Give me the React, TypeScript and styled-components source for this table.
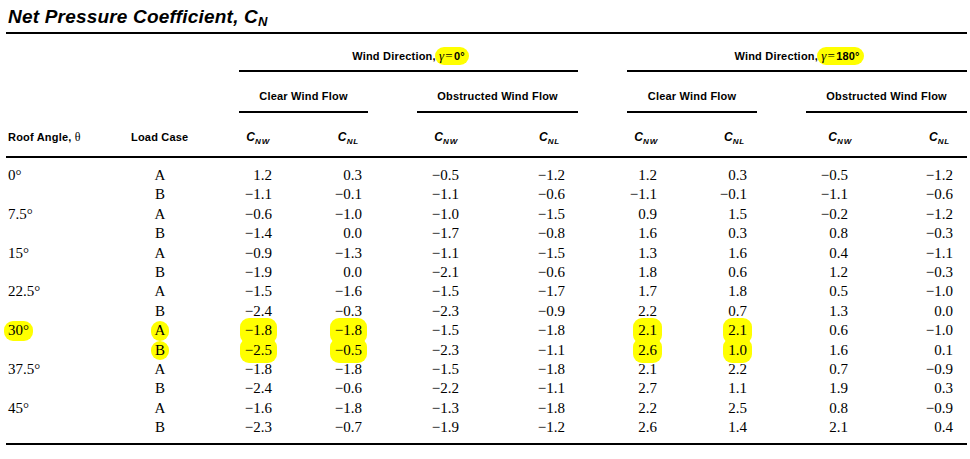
import React from 'react';
import styled, { createGlobalStyle } from 'styled-components';

const GlobalStyle = createGlobalStyle`
  html, body {
    margin: 0;
    padding: 0;
    background: #ffffff;
    color: #000000;
  }
`;

const Page = styled.main`
  padding: 5px 3px 0 6px;
  font-family: 'Liberation Sans', Arial, sans-serif;
`;

const Title = styled.h1`
  margin: 0 0 3px 2px;
  font-size: 19px;
  line-height: 24px;
  font-weight: bold;
  font-style: italic;
  letter-spacing: 0.2px;
`;

const TitleSub = styled.sub`
  font-size: 13px;
  vertical-align: -3px;
  line-height: 0;
`;

const Table = styled.table`
  width: 961px;
  table-layout: fixed;
  border-collapse: collapse;
  border-top: 2px solid #000;
`;

const HeadCell = styled.th<{ $pt: number }>`
  padding: ${(p) => p.$pt}px 0 0 0;
  font-size: 11px;
  line-height: 14px;
  font-weight: bold;
  text-align: center;
  vertical-align: bottom;
`;

const Span = styled.div<{ $ml: number; $mr: number; $pb: number }>`
  margin: 0 ${(p) => p.$mr}px 0 ${(p) => p.$ml}px;
  padding-bottom: ${(p) => p.$pb}px;
  border-bottom: 2px solid #000;
  white-space: nowrap;
  letter-spacing: 0.2px;
`;

const ColHead = styled.th<{ $align: 'left' | 'center' | 'right'; $pl?: number; $pr?: number }>`
  padding: 17px ${(p) => p.$pr ?? 0}px 12px ${(p) => p.$pl ?? 0}px;
  font-size: 11px;
  line-height: 14px;
  font-weight: bold;
  text-align: ${(p) => p.$align};
  border-bottom: 2px solid #000;
  white-space: nowrap;
  letter-spacing: 0.2px;
`;

const Sym = styled.span`
  font-style: italic;
  font-size: 12px;
`;

const SymSub = styled.sub`
  font-size: 8px;
  vertical-align: -2.5px;
  line-height: 0;
  letter-spacing: 0.8px;
`;

const Serif = styled.span<{ $italic?: boolean; $size?: number }>`
  font-family: 'Liberation Serif', 'Times New Roman', serif;
  font-style: ${(p) => (p.$italic ? 'italic' : 'normal')};
  font-weight: normal;
  font-size: ${(p) => p.$size ?? 12}px;
`;

const Equals = styled.span`
  font-family: 'Liberation Serif', 'Times New Roman', serif;
  font-weight: normal;
  font-size: 13px;
  margin: 0 1px;
`;

const Mark = styled.span<{ $padY?: number; $padX?: number }>`
  display: inline-block;
  background: #ffff00;
  border-radius: 9px;
  padding: ${(p) => p.$padY ?? 0}px ${(p) => p.$padX ?? 3}px;
  margin: -${(p) => p.$padY ?? 0}px -${(p) => p.$padX ?? 3}px;
`;

const Row = styled.tr<{ $first?: boolean; $last?: boolean }>`
  & > td {
    padding-top: ${(p) => (p.$first ? 8 : 0)}px;
    padding-bottom: ${(p) => (p.$last ? 5 : 0)}px;
    border-bottom: ${(p) => (p.$last ? '2px solid #000' : 'none')};
  }
`;

const Cell = styled.td<{ $align: 'left' | 'center' | 'right'; $pl?: number; $pr?: number }>`
  font-family: 'Liberation Serif', 'Times New Roman', serif;
  font-size: 15px;
  line-height: 19.4px;
  height: 19.4px;
  text-align: ${(p) => p.$align};
  padding-left: ${(p) => p.$pl ?? 0}px;
  padding-right: ${(p) => p.$pr ?? 0}px;
  white-space: nowrap;
`;

const colWidths = [114, 80, 100, 92, 108, 102, 98, 81, 99, 87];
const dataPad = [28, 30, 41, 37, 43, 34, 32, 14];
const headPad = [30, 33, 42, 42, 42, 36, 28, 17];
const headSubs = ['NW', 'NL', 'NW', 'NL', 'NW', 'NL', 'NW', 'NL'];

type Load = { c: string; v: string[] };
type Angle = { a: string; loads: Load[] };

const m = (s: string) => s.replace(/-/g, '\u2212');
const vals = (s: string) => s.split(' ').map(m);

const data: Angle[] = [
  { a: '0°', loads: [
    { c: 'A', v: vals('1.2 0.3 -0.5 -1.2 1.2 0.3 -0.5 -1.2') },
    { c: 'B', v: vals('-1.1 -0.1 -1.1 -0.6 -1.1 -0.1 -1.1 -0.6') },
  ] },
  { a: '7.5°', loads: [
    { c: 'A', v: vals('-0.6 -1.0 -1.0 -1.5 0.9 1.5 -0.2 -1.2') },
    { c: 'B', v: vals('-1.4 0.0 -1.7 -0.8 1.6 0.3 0.8 -0.3') },
  ] },
  { a: '15°', loads: [
    { c: 'A', v: vals('-0.9 -1.3 -1.1 -1.5 1.3 1.6 0.4 -1.1') },
    { c: 'B', v: vals('-1.9 0.0 -2.1 -0.6 1.8 0.6 1.2 -0.3') },
  ] },
  { a: '22.5°', loads: [
    { c: 'A', v: vals('-1.5 -1.6 -1.5 -1.7 1.7 1.8 0.5 -1.0') },
    { c: 'B', v: vals('-2.4 -0.3 -2.3 -0.9 2.2 0.7 1.3 0.0') },
  ] },
  { a: '30°', loads: [
    { c: 'A', v: vals('-1.8 -1.8 -1.5 -1.8 2.1 2.1 0.6 -1.0') },
    { c: 'B', v: vals('-2.5 -0.5 -2.3 -1.1 2.6 1.0 1.6 0.1') },
  ] },
  { a: '37.5°', loads: [
    { c: 'A', v: vals('-1.8 -1.8 -1.5 -1.8 2.1 2.2 0.7 -0.9') },
    { c: 'B', v: vals('-2.4 -0.6 -2.2 -1.1 2.7 1.1 1.9 0.3') },
  ] },
  { a: '45°', loads: [
    { c: 'A', v: vals('-1.6 -1.8 -1.3 -1.8 2.2 2.5 0.8 -0.9') },
    { c: 'B', v: vals('-2.3 -0.7 -1.9 -1.2 2.6 1.4 2.1 0.4') },
  ] },
];

// the 30° row is marked up in the original, as are the two clear-flow columns of it
const markedAngle = '30°';
const markedCols = [0, 1, 4, 5];

const Direction: React.FC<{ deg: string }> = ({ deg }) => (
  <>
    Wind Direction,{' '}
    <Mark $padX={4} $padY={2}>
      <Serif $italic $size={13}>γ</Serif>
      <Equals>=</Equals>
      {deg}°
    </Mark>
  </>
);

const App: React.FC = () => {
  return (
    <Page>
      <GlobalStyle />
      <Title>
        Net Pressure Coefficient, C<TitleSub>N</TitleSub>
      </Title>
      <Table>
        <colgroup>
          {colWidths.map((w, i) => (
            <col key={i} style={{ width: w }} />
          ))}
        </colgroup>
        <thead>
          <tr>
            <HeadCell $pt={15} colSpan={2} />
            <HeadCell $pt={15} colSpan={4}>
              <Span $ml={39} $mr={24} $pb={7}>
                <Direction deg="0" />
              </Span>
            </HeadCell>
            <HeadCell $pt={15} colSpan={4}>
              <Span $ml={25} $mr={0} $pb={7}>
                <Direction deg="180" />
              </Span>
            </HeadCell>
          </tr>
          <tr>
            <HeadCell $pt={17} colSpan={2} />
            <HeadCell $pt={17} colSpan={2}>
              <Span $ml={39} $mr={24} $pb={8}>Clear Wind Flow</Span>
            </HeadCell>
            <HeadCell $pt={17} colSpan={2}>
              <Span $ml={25} $mr={24} $pb={8}>Obstructed Wind Flow</Span>
            </HeadCell>
            <HeadCell $pt={17} colSpan={2}>
              <Span $ml={25} $mr={24} $pb={8}>Clear Wind Flow</Span>
            </HeadCell>
            <HeadCell $pt={17} colSpan={2}>
              <Span $ml={25} $mr={0} $pb={8}>Obstructed Wind Flow</Span>
            </HeadCell>
          </tr>
          <tr>
            <ColHead $align="left" $pl={2}>
              Roof Angle, <Serif>θ</Serif>
            </ColHead>
            <ColHead $align="left" $pl={11}>Load Case</ColHead>
            {headSubs.map((s, i) => (
              <ColHead key={i} $align="right" $pr={headPad[i]}>
                <Sym>
                  C<SymSub>{s}</SymSub>
                </Sym>
              </ColHead>
            ))}
          </tr>
        </thead>
        <tbody>
          {data.map((ang, ai) =>
            ang.loads.map((ld, li) => {
              const marked = ang.a === markedAngle;
              return (
                <Row
                  key={`${ai}-${li}`}
                  $first={ai === 0 && li === 0}
                  $last={ai === data.length - 1 && li === ang.loads.length - 1}
                >
                  <Cell $align="left" $pl={2}>
                    {li === 0 && (marked ? <Mark $padX={4}>{ang.a}</Mark> : ang.a)}
                  </Cell>
                  <Cell $align="center">
                    {marked ? <Mark $padX={4}>{ld.c}</Mark> : ld.c}
                  </Cell>
                  {ld.v.map((v, vi) => (
                    <Cell key={vi} $align="right" $pr={dataPad[vi]}>
                      {marked && markedCols.includes(vi) ? (
                        <Mark $padY={3} $padX={5}>{v}</Mark>
                      ) : (
                        v
                      )}
                    </Cell>
                  ))}
                </Row>
              );
            }),
          )}
        </tbody>
      </Table>
    </Page>
  );
};

export default App;
